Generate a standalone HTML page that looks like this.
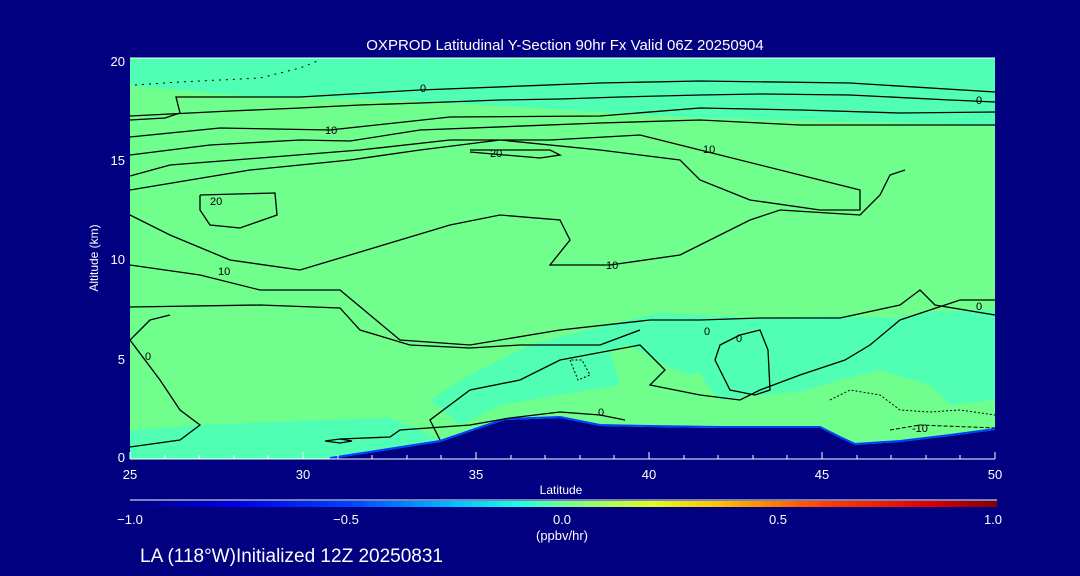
<!DOCTYPE html>
<html><head><style>
html,body{margin:0;padding:0;background:#000080;width:1080px;height:576px;overflow:hidden}
svg{display:block}
text{font-family:"Liberation Sans",sans-serif;fill:#fff}
</style></head><body>
<svg width="1080" height="576" viewBox="0 0 1080 576">
<defs>
<linearGradient id="cb" x1="0" x2="1">
<stop offset="0" stop-color="#000080"/><stop offset="0.12" stop-color="#0000e0"/><stop offset="0.25" stop-color="#0040ff"/>
<stop offset="0.375" stop-color="#00c0ff"/><stop offset="0.45" stop-color="#20ffe0"/><stop offset="0.5" stop-color="#70ff8c"/>
<stop offset="0.6" stop-color="#e0ff20"/><stop offset="0.68" stop-color="#ffc000"/><stop offset="0.8" stop-color="#ff4000"/>
<stop offset="0.92" stop-color="#e00000"/><stop offset="1" stop-color="#800000"/></linearGradient>
</defs>
<text x="565" y="50" font-size="15" text-anchor="middle">OXPROD Latitudinal Y-Section 90hr  Fx Valid 06Z 20250904</text>
<rect x="130" y="58" width="865" height="401" fill="#70ff8c"/>
<polygon fill="#50ffb4" points="130,58 995,58 995,125 700,118 400,100 230,95 130,85"/>
<polygon fill="#50ffb4" points="430,400 470,375 530,345 620,322 660,313 720,316 760,318 830,316 900,318 930,312 995,310 995,400 950,405 930,385 880,370 840,380 800,392 760,395 720,400 700,380 665,365 630,345 610,350 620,385 560,395 500,405 460,425"/>
<polygon fill="#70ff8c" points="680,378 700,372 710,390 698,398"/>
<polygon fill="#50ffb4" points="130,430 200,425 320,420 390,418 420,430 440,440 330,459 130,459"/>
<polygon fill="#000080" points="330,459 440,442 475,430 505,420 560,418 600,426 650,427 720,428 820,428 840,438 855,445 900,442 950,436 995,430 995,459"/>
<polyline fill="none" stroke="#0040ff" stroke-width="2" points="330,458 440,441 475,429 505,419 560,417 600,425 650,426 720,427 820,427 840,437 855,444 900,441 950,435 995,429"/>
<g fill="none" stroke="#000" stroke-width="1.3">
<polyline points="130,116 230,111 300,108 360,105 420,103 500,100 560,99 620,97 700,95 760,94 850,95 950,100 995,102"/>
<polyline points="130,120 165,118 180,113 176,97 300,97 420,90 600,83 700,81 850,83 995,92"/>
<polyline points="130,137 220,128 330,130 450,117 600,116 700,108 800,110 900,113 995,112"/>
<polyline points="130,155 210,145 300,140 350,141 420,130 600,123 700,120 800,125 995,125"/>
<polyline points="130,176 170,165 260,158 360,150 450,140 550,140 640,135 700,150 800,175 860,190 860,210 820,210 750,200 700,180 680,160 600,150 500,140 420,150 350,160 250,170 130,190"/>
<polyline points="130,215 170,235 230,260 300,270 400,240 450,225 500,215 560,220 570,240 550,265 610,265 680,255 750,220 780,210 860,215 880,195 890,175 905,170"/>
<polyline points="130,265 200,275 260,290 340,290 400,340 470,345 560,330 650,320 700,320 760,318 840,318 900,305 920,290 935,305 995,315"/>
<polyline points="130,307 260,305 340,308 360,330 410,345 470,348 520,345 600,345 640,330"/>
<polyline points="470,150 550,150 560,155 540,158 470,152"/>
<polyline points="200,195 275,193 277,215 240,228 210,225 200,210 200,195"/>
<polyline points="740,335 760,330 768,350 770,390 755,395 730,390 715,360 720,345 740,335"/>
<polyline points="130,447 180,440 200,425 180,410 160,380 130,340 150,320 170,315"/>
<polyline points="440,440 430,420 470,390 520,380 560,360 640,345 665,370 650,385 700,395 740,400 760,390 800,375 845,360 870,345 900,320 960,300 995,300"/>
<polyline points="340,439 390,437 400,430 470,425 510,418 560,412 600,415 625,420"/>
<polyline points="325,441 340,443 352,441 340,439 325,441"/>
<polyline points="570,360 578,380 590,375 582,360 570,360" stroke-dasharray="2,2" stroke-width="1"/>
<polyline points="830,400 850,390 880,395 900,410 930,412 960,410 995,415" stroke-dasharray="2,2" stroke-width="1"/>
<polyline points="890,430 920,425 995,428" stroke-dasharray="4,2" stroke-width="1"/>
<polyline points="135,85 180,82 260,78 300,68 320,60" stroke-dasharray="2,5" stroke-width="1"/>
</g>
<g font-size="11">
<text x="420" y="92" style="fill:#000">0</text><text x="976" y="104" style="fill:#000">0</text>
<text x="325" y="134" style="fill:#000">10</text><text x="703" y="153" style="fill:#000">10</text>
<text x="490" y="157" style="fill:#000">20</text><text x="210" y="205" style="fill:#000">20</text>
<text x="218" y="275" style="fill:#000">10</text><text x="606" y="269" style="fill:#000">10</text>
<text x="704" y="335" style="fill:#000">0</text><text x="736" y="342" style="fill:#000">0</text>
<text x="145" y="360" style="fill:#000">0</text><text x="976" y="310" style="fill:#000">0</text>
<text x="598" y="416" style="fill:#000">0</text><text x="912" y="432" style="fill:#000">-10</text>
</g>
<line x1="130" y1="459" x2="995" y2="459" stroke="#fff"/>
<line x1="130" y1="58" x2="995" y2="58" stroke="#fff"/>
<g stroke="#fff">
<line x1="130" y1="459" x2="130" y2="452"/><line x1="303" y1="459" x2="303" y2="452"/><line x1="476" y1="459" x2="476" y2="452"/><line x1="649" y1="459" x2="649" y2="452"/><line x1="822" y1="459" x2="822" y2="452"/><line x1="995" y1="459" x2="995" y2="452"/>
<path d="M165 459v-4M199 459v-4M234 459v-4M268 459v-4M338 459v-4M372 459v-4M407 459v-4M441 459v-4M511 459v-4M545 459v-4M580 459v-4M614 459v-4M684 459v-4M718 459v-4M753 459v-4M787 459v-4M857 459v-4M891 459v-4M926 459v-4M960 459v-4"/>
</g>
<g font-size="13" text-anchor="middle">
<text x="130" y="479">25</text><text x="303" y="479">30</text><text x="476" y="479">35</text><text x="649" y="479">40</text><text x="822" y="479">45</text><text x="995" y="479">50</text>
<text x="561" y="494" font-size="12">Latitude</text>
</g>
<g font-size="13" text-anchor="end">
<text x="125" y="66">20</text><text x="125" y="165">15</text><text x="125" y="264">10</text><text x="125" y="364">5</text><text x="125" y="462">0</text>
</g>
<text transform="translate(98,258) rotate(-90)" font-size="12" text-anchor="middle">Altitude (km)</text>
<line x1="130" y1="500" x2="997" y2="500" stroke="#fff"/>
<rect x="130" y="501" width="867" height="6" fill="url(#cb)"/>
<g font-size="13" text-anchor="middle">
<text x="130" y="524">−1.0</text><text x="346" y="524">−0.5</text><text x="562" y="524">0.0</text><text x="778" y="524">0.5</text><text x="993" y="524">1.0</text>
<text x="562" y="540">(ppbv/hr)</text>
</g>
<text x="140" y="562" font-size="19">LA (118°W)Initialized 12Z 20250831</text>
</svg>
</body></html>
